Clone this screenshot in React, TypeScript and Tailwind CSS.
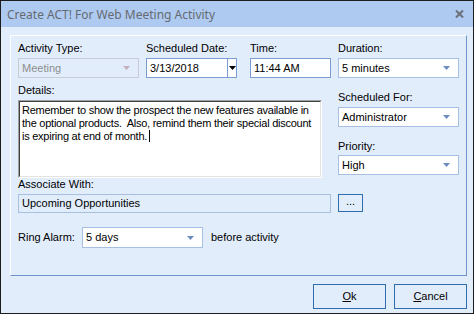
import React from "react";

const body = "font-['Liberation_Sans',Arial,sans-serif] text-[11px] leading-[13px] text-[#000]";

function Arrow({ color = "#6d8cc0" }: { color?: string }) {
  return (
    <svg width="7" height="4" viewBox="0 0 7 4" className="shrink-0">
      <path d="M0 0h7L3.5 4z" fill={color} />
    </svg>
  );
}

function Combo({
  value,
  width,
  height = 20,
  disabled = false,
}: {
  value: string;
  width: number;
  height?: number;
  disabled?: boolean;
}) {
  return (
    <div
      className={
        "flex items-center justify-between pl-[3px] pr-[8px] border " +
        (disabled
          ? "bg-[#e2edfc] border-[#c9ccd4] text-[#8d8d8d]"
          : "bg-white border-[#a7bfe2] text-black")
      }
      style={{ width, height }}
    >
      <span>{value}</span>
      <Arrow color={disabled ? "#c7aebf" : "#6d8cc0"} />
    </div>
  );
}

function Label({ children, className = "" }: { children: React.ReactNode; className?: string }) {
  return <div className={"h-[13px] whitespace-nowrap " + className}>{children}</div>;
}

export default function App() {
  return (
    <div className={"w-[474px] h-[314px] border border-[#1c1c1c] bg-[#e2edfc] flex flex-col overflow-hidden " + body}>
      {/* title bar */}
      <div className="h-[26px] shrink-0 bg-[#aecaf0] flex items-center justify-between pl-[6px] pr-[9px]">
        <span className="font-['Noto_Sans',sans-serif] text-[12px] text-[#666a70]">
          Create ACT! For Web Meeting Activity
        </span>
        <svg width="9" height="8" viewBox="0 0 9 8">
          <path d="M1 0.5l7 7M8 0.5l-7 7" stroke="#6b6f76" strokeWidth="2" />
        </svg>
      </div>

      {/* group panel */}
      <div className="ml-[9px] mr-[6px] mt-[8px] h-[241px] shrink-0 border border-t-white border-l-white border-r-[#6f92c9] border-b-[#6f92c9] flex flex-col pl-[7px] pt-[6px]">
        <div className="flex gap-[7px]">
          {/* left column */}
          <div className="w-[313px] flex flex-col">
            <div className="flex">
              <div className="w-[121px] flex flex-col gap-[3px]">
                <Label>Activity Type:</Label>
                <Combo value="Meeting" width={121} disabled />
              </div>
              <div className="ml-[7px] w-[91px] flex flex-col gap-[3px]">
                <Label>Scheduled Date:</Label>
                <div className="flex h-[20px]">
                  <div className="w-[82px] bg-white border border-[#7b9ed4] pl-[3px] flex items-center">3/13/2018</div>
                  <div className="w-[9px] bg-white border border-[#7b9ed4] border-l-0 flex items-center justify-center">
                    <Arrow color="#000" />
                  </div>
                </div>
              </div>
              <div className="ml-[13px] w-[81px] flex flex-col gap-[3px]">
                <Label>Time:</Label>
                <div className="h-[20px] bg-white border border-[#7b9ed4] pl-[3px] flex items-center">11:44 AM</div>
              </div>
            </div>
            <Label className="mt-[6px]">Details:</Label>
            <div className="mt-[3px] w-[304px] h-[78px] border border-t-[#a0a0a0] border-l-[#a0a0a0] border-r-white border-b-white">
              <div className="h-full bg-white border border-t-[#404040] border-l-[#404040] border-r-[#e3e3e3] border-b-[#e3e3e3] px-[2px] pt-[2px] whitespace-nowrap tracking-[-0.25px]">
                Remember to show the prospect the new features available in
                <br />
                the optional products.&nbsp; Also, remind them their special discount
                <br />
                is expiring at end of month.
                <span className="inline-block w-px h-[12px] bg-black align-[-2px] ml-[2px]" />
              </div>
            </div>
          </div>

          {/* right column */}
          <div className="w-[121px] flex flex-col">
            <Label>Duration:</Label>
            <div className="mt-[3px]">
              <Combo value="5 minutes" width={121} />
            </div>
            <Label className="mt-[13px]">Scheduled For:</Label>
            <div className="mt-[3px]">
              <Combo value="Administrator" width={121} />
            </div>
            <Label className="mt-[13px]">Priority:</Label>
            <div className="mt-[2px]">
              <Combo value="High" width={121} />
            </div>
          </div>
        </div>

        <Label className="mt-0">Associate With:</Label>
        <div className="mt-[3px] flex gap-[7px]">
          <div className="w-[313px] h-[19px] border border-[#a8bfe0] pl-[3px] flex items-center">
            Upcoming Opportunities
          </div>
          <div className="w-[25px] h-[18px] border border-[#2f6db0] flex items-center justify-center pb-[3px]">
            ...
          </div>
        </div>

        <div className="mt-[14px] flex items-center">
          <div className="w-[64px]">Ring Alarm:</div>
          <Combo value="5 days" width={121} height={21} />
          <div className="ml-[8px]">before activity</div>
        </div>
      </div>

      {/* buttons */}
      <div className="mt-[8px] mr-[6px] flex justify-end gap-[8px]">
        <button className="w-[73px] h-[25px] border border-[#2f6db0] bg-[#e2edfc] flex items-center justify-center">
          <span>
            <span className="underline">O</span>k
          </span>
        </button>
        <button className="w-[73px] h-[25px] border border-[#2f6db0] bg-[#e2edfc] flex items-center justify-center">
          <span>
            <span className="underline">C</span>ancel
          </span>
        </button>
      </div>
    </div>
  );
}
